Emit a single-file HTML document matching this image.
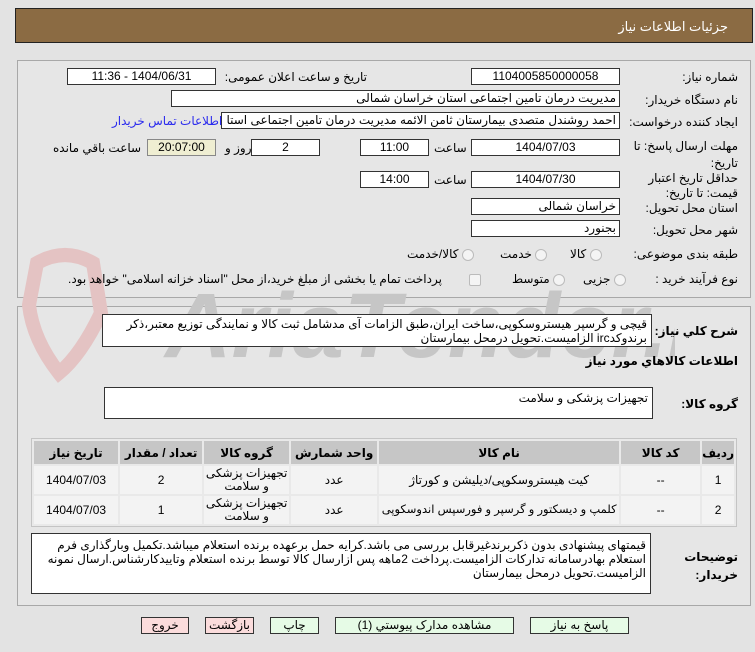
<!DOCTYPE html>
<html><head><meta charset="utf-8"><style>
*{box-sizing:border-box;margin:0;padding:0}
body{width:755px;height:652px;background:#e3e3e3;font-family:"Liberation Sans","DejaVu Sans",sans-serif;font-size:12px;color:#000;position:relative;overflow:hidden;direction:rtl}
.a{position:absolute;white-space:nowrap}
.hdr{left:15px;top:8px;width:738px;height:35px;background:#8b6b43;border:1px solid #222}
.hdr span{position:absolute;right:24px;top:10px;color:#fff;font-size:13px}
.panel{position:absolute;left:17px;width:734px;border:1px solid #a8a8a8;background:#e6e6e6}
.in{position:absolute;background:#fff;border:1px solid #333;height:17px;font-size:12px;line-height:15px;padding:0 3px;text-align:center;overflow:hidden;white-space:nowrap}
.r{text-align:right}
.lbl{position:absolute;right:17px;font-size:12px}
.rad{display:inline-block;width:12px;height:12px;border-radius:50%;border:1px solid #bbb;background:#f4f4f4;vertical-align:middle}
.ta{position:absolute;background:#fff;border:1px solid #333;padding:2px 4px;font-size:12px;line-height:20px;text-align:right;white-space:normal}
table{position:absolute;left:31px;top:438px;width:706px;border-collapse:separate;border-spacing:2px;background:#e9e9e9;border:1px solid #c4c4c4}
th{background:#c6c6c6;height:23px;font-size:12px;font-weight:bold}
td{background:#f3f3f3;height:28px;text-align:center;font-size:12px;line-height:13px}
.btn{position:absolute;top:617px;height:17px;border:1px solid #333;background:#e6fbe6;text-align:center;font-size:12px;line-height:15px}
.pk{background:#fbdcdc}
</style></head><body>
<div class="a hdr"><span>جزئیات اطلاعات نیاز</span></div>

<div class="panel" style="top:60px;height:238px"></div>
<div class="panel" style="top:306px;height:300px"></div>

<!-- watermark -->
<svg class="a" style="left:15px;top:245px" width="660" height="140">
<path d="M22 18 Q50 2 78 18 L86 68 Q66 110 44 128 Q18 95 14 60 Z" fill="none" stroke="#e4c3c3" stroke-width="14"/>
<text x="150" y="112" font-family="Liberation Sans" font-weight="bold" font-style="italic" font-size="92" fill="#c6c6c6" direction="ltr">AriaTender.net</text>
</svg>

<div class="lbl" style="top:70px">شماره نیاز:</div>
<div class="in" style="left:471px;top:68px;width:149px">1104005850000058</div>
<div class="a" style="right:388px;top:70px">تاریخ و ساعت اعلان عمومی:</div>
<div class="in" style="left:67px;top:68px;width:149px">1404/06/31 - 11:36</div>

<div class="lbl" style="top:93px">نام دستگاه خریدار:</div>
<div class="in r" style="left:171px;top:90px;width:449px">مدیریت درمان تامین اجتماعی استان خراسان شمالی</div>

<div class="lbl" style="top:115px">ایجاد کننده درخواست:</div>
<div class="in r" style="left:221px;top:112px;width:399px">احمد روشندل متصدی بیمارستان ثامن الائمه مدیریت درمان تامین اجتماعی استا</div>
<div class="a" style="left:112px;top:114px;color:#2a2aee">اطلاعات تماس خریدار</div>

<div class="lbl" style="top:139px">مهلت ارسال پاسخ: تا</div>
<div class="lbl" style="top:156px">تاریخ:</div>
<div class="in" style="left:471px;top:139px;width:149px">1404/07/03</div>
<div class="a" style="left:434px;top:141px">ساعت</div>
<div class="in" style="left:360px;top:139px;width:69px">11:00</div>
<div class="in" style="left:251px;top:139px;width:69px">2</div>
<div class="a" style="left:225px;top:141px">روز و</div>
<div class="in" style="left:147px;top:139px;width:69px;background:#efeed2;border-color:#888">20:07:00</div>
<div class="a" style="left:53px;top:141px">ساعت باقي مانده</div>

<div class="lbl" style="top:171px">حداقل تاریخ اعتبار</div>
<div class="lbl" style="top:186px">قیمت: تا تاریخ:</div>
<div class="in" style="left:471px;top:171px;width:149px">1404/07/30</div>
<div class="a" style="left:434px;top:173px">ساعت</div>
<div class="in" style="left:360px;top:171px;width:69px">14:00</div>

<div class="lbl" style="top:201px">استان محل تحویل:</div>
<div class="in r" style="left:471px;top:198px;width:149px">خراسان شمالی</div>
<div class="lbl" style="top:223px">شهر محل تحویل:</div>
<div class="in r" style="left:471px;top:220px;width:149px">بجنورد</div>

<div class="lbl" style="top:247px">طبقه بندی موضوعی:</div>
<div class="a" style="left:570px;top:247px"><span class="rad"></span> کالا</div>
<div class="a" style="left:500px;top:247px"><span class="rad"></span> خدمت</div>
<div class="a" style="left:407px;top:247px"><span class="rad"></span> کالا/خدمت</div>

<div class="lbl" style="top:272px">نوع فرآیند خرید :</div>
<div class="a" style="left:583px;top:272px"><span class="rad"></span> جزیی</div>
<div class="a" style="left:512px;top:272px"><span class="rad"></span> متوسط</div>
<div class="a" style="left:68px;top:272px"><span class="rad" style="border-radius:2px"></span> &nbsp;&nbsp;&nbsp;&nbsp;&nbsp;&nbsp;&nbsp;پرداخت تمام یا بخشی از مبلغ خرید،از محل "اسناد خزانه اسلامی" خواهد بود.</div>

<div class="lbl" style="top:324px;font-weight:bold">شرح کلي نياز:</div>
<div class="ta" style="left:102px;top:314px;width:550px;height:33px;line-height:14px">قیچی و گرسپر هیستروسکوپی،ساخت ایران،طبق الزامات آی مدشامل ثبت کالا و نمایندگی توزیع معتبر،ذکر برندوکدirc الزامیست.تحویل درمحل بیمارستان</div>

<div class="lbl" style="top:354px;font-weight:bold">اطلاعات کالاهاي مورد نياز</div>
<div class="lbl" style="top:397px;font-weight:bold">گروه کالا:</div>
<div class="ta" style="left:104px;top:387px;width:549px;height:32px;line-height:16px">تجهیزات پزشکی و سلامت</div>

<table dir="rtl">
<tr><th style="width:27px">ردیف</th><th style="width:79px">کد کالا</th><th style="width:240px">نام کالا</th><th style="width:86px">واحد شمارش</th><th style="width:85px">گروه کالا</th><th style="width:82px">تعداد / مقدار</th><th>تاریخ نیاز</th></tr>
<tr><td>1</td><td>--</td><td>کیت هیستروسکوپی/دیلیشن و کورتاژ</td><td>عدد</td><td>تجهیزات پزشکی<br>و سلامت</td><td>2</td><td>1404/07/03</td></tr>
<tr><td>2</td><td>--</td><td style="white-space:nowrap;font-size:11.5px">کلمپ و دیسکتور و گرسپر و فورسپس اندوسکوپی</td><td>عدد</td><td>تجهیزات پزشکی<br>و سلامت</td><td>1</td><td>1404/07/03</td></tr>
</table>

<div class="lbl" style="top:550px;font-weight:bold">توضیحات</div>
<div class="lbl" style="top:568px;font-weight:bold">خریدار:</div>
<div class="ta" style="left:31px;top:533px;width:620px;height:61px;line-height:14px;padding-top:4px">قیمتهای پیشنهادی بدون ذکربرندغیرقابل بررسی می باشد.کرایه حمل برعهده برنده استعلام میباشد.تکمیل وبارگذاری فرم استعلام بهادرسامانه تدارکات الزامیست.پرداخت 2ماهه پس ازارسال کالا توسط برنده استعلام وتاییدکارشناس.ارسال نمونه الزامیست.تحویل درمحل بیمارستان</div>

<div class="btn" style="left:530px;width:99px">پاسخ به نیاز</div>
<div class="btn" style="left:335px;width:179px">مشاهده مدارک پیوستي (1)</div>
<div class="btn" style="left:270px;width:49px">چاپ</div>
<div class="btn pk" style="left:205px;width:49px">بازگشت</div>
<div class="btn pk" style="left:141px;width:48px">خروج</div>
</body></html>
